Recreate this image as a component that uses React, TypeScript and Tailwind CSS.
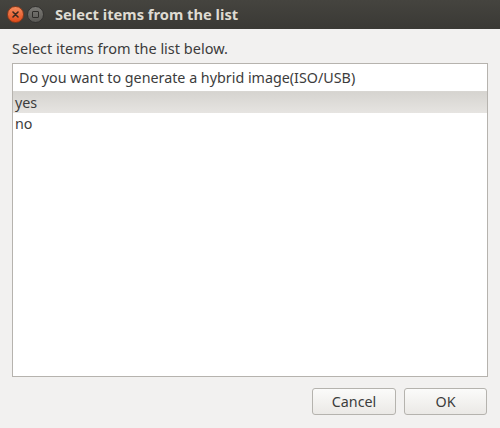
import React from "react";

export default function App() {
  return (
    <div className="w-[500px] h-[428px] bg-[#f2f1f0] flex flex-col overflow-hidden" style={{ fontFamily: '"Noto Sans", "DejaVu Sans", sans-serif' }}>
      <div className="h-[29px] flex items-center bg-gradient-to-b from-[#45443f] to-[#3a3935] pl-[7px]">
        <div className="w-[17px] h-[17px] rounded-full bg-gradient-to-b from-[#f58a5b] to-[#df4a16] border border-[#8e3a1a] flex items-center justify-center">
          <svg width="7" height="7" viewBox="0 0 7 7">
            <path d="M1 1L6 6M6 1L1 6" stroke="#3a2a20" strokeWidth="1.6" strokeLinecap="round" />
          </svg>
        </div>
        <div className="ml-[3px] w-[17px] h-[17px] rounded-full bg-gradient-to-b from-[#7a7975] to-[#5a5955] border border-[#333230] flex items-center justify-center">
          <div className="w-[7px] h-[7px] border-[1.5px] border-[#2e2d2a] rounded-[1px]" />
        </div>
        <div className="ml-[11px] text-[14.7px] font-bold text-[#dfdbd2]">Select items from the list</div>
      </div>
      <div className="flex-1 flex flex-col px-[12px] pt-[10px] pb-[12px]">
        <div className="text-[14.5px] text-[#3c3c3c] leading-[18px] h-[24px]">Select items from the list below.</div>
        <div className="h-[314px] border border-[#b6b3ae] bg-white flex flex-col">
          <div className="h-[28px] flex items-center pl-[6px] border-b border-[#d8d6d2] text-[14.3px] text-[#3c3c3c]">
            Do you want to generate a hybrid image(ISO/USB)
          </div>
          <div className="h-[21px] flex items-center pl-[2px] text-[14.3px] text-[#3c3c3c] bg-gradient-to-b from-[#d6d4d0] to-[#e6e4e1]">yes</div>
          <div className="h-[21px] flex items-center pl-[2px] text-[14.3px] text-[#3c3c3c]">no</div>
        </div>
        <div className="flex justify-end gap-[8px] mt-[11px] pr-[1px]">
          <button className="w-[84px] h-[27px] rounded-[3px] border border-[#b5b3ae] bg-gradient-to-b from-[#fbfbfa] to-[#ebe9e6] text-[14.3px] text-[#3c3c3c]">Cancel</button>
          <button className="w-[83px] h-[27px] rounded-[3px] border border-[#b5b3ae] bg-gradient-to-b from-[#fbfbfa] to-[#ebe9e6] text-[14.3px] text-[#3c3c3c]">OK</button>
        </div>
      </div>
    </div>
  );
}
